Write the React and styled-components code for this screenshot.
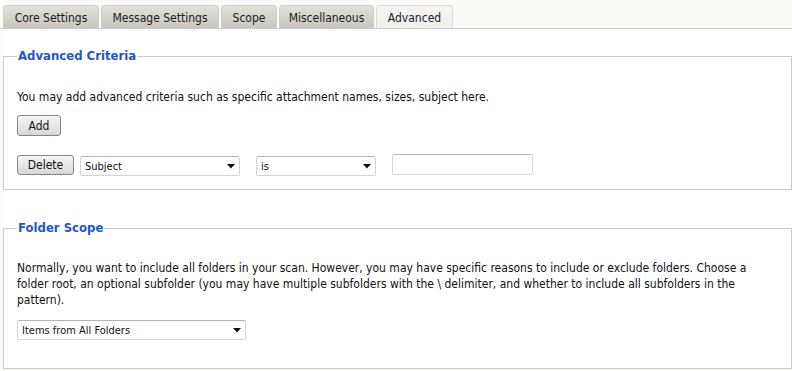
import React from "react";
import styled, { createGlobalStyle } from "styled-components";

const Global = createGlobalStyle`
  html, body { margin: 0; padding: 0; }
  body {
    background: #fafaf8;
    font-family: "DejaVu Sans Condensed", "DejaVu Sans", Tahoma, sans-serif;
    font-size: 12px;
    color: #111;
  }
`;

const TabBar = styled.div`
  display: flex;
  align-items: flex-end;
  gap: 2px;
  height: 28px;
  padding: 0 0 0 3px;
  border-bottom: 1px solid #c9c9c9;
  background: #fafaf8;
`;

const Tab = styled.div`
  box-sizing: border-box;
  width: ${(p) => p.$w}px;
  height: 23px;
  display: flex;
  align-items: center;
  justify-content: center;
  padding-top: 1px;
  border: 1px solid ${(p) => (p.$active ? "#dcdbd5" : "#d2d0c6")};
  border-bottom: none;
  border-radius: 4px 4px 0 0;
  background: ${(p) =>
    p.$active
      ? "linear-gradient(#f6f5f1, #efeee9)"
      : "linear-gradient(#e2e0d8, #c9c7bd)"};
  color: #1a1a28;
  font-size: 12px;
  white-space: nowrap;
`;

const Panel = styled.div`
  margin-left: 3px;
  background: #fff;
  padding-top: 20px;
  padding-bottom: 0;
`;

const Fieldset = styled.fieldset`
  margin: ${(p) => p.$mt || 0}px 0 0 0;
  padding: 0 13px ${(p) => p.$pb}px 13px;
  border: 1px solid #cbcbcb;
  min-width: 0;
`;

const Legend = styled.legend`
  padding: 0 1px;
  font-weight: bold;
  font-size: 13px;
  line-height: 14px;
  color: #1f56c9;
`;

const Text = styled.p`
  margin: ${(p) => p.$mt}px 0 0 0;
  line-height: ${(p) => p.$lh || 16}px;
  font-size: 12px;
`;

const Button = styled.button`
  box-sizing: border-box;
  height: ${(p) => p.$h || 20}px;
  width: ${(p) => p.$w}px;
  margin-top: ${(p) => p.$mt || 0}px;
  padding: 0;
  border: 1px solid #858585;
  border-radius: 3px;
  background: linear-gradient(#f7f7f7, #e6e6e6 55%, #d6d6d6);
  font-family: inherit;
  font-size: 12px;
  color: #111;
  display: block;
`;

const Row = styled.div`
  display: flex;
  align-items: flex-start;
  margin-top: 19px;
`;

const SelectWrap = styled.div`
  position: relative;
  box-sizing: border-box;
  width: ${(p) => p.$w}px;
  height: ${(p) => p.$h || 20}px;
  margin-left: ${(p) => p.$ml || 0}px;
  margin-top: ${(p) => p.$mt || 0}px;
`;

const Select = styled.select`
  appearance: none;
  -webkit-appearance: none;
  box-sizing: border-box;
  width: 100%;
  height: 100%;
  margin: 0;
  padding: 0 16px 0 4px;
  border: 1px solid #d4d4d4;
  border-top-color: #b4b4b4;
  border-radius: 2px;
  background: #fff;
  font-family: inherit;
  font-size: 11px;
  color: #111;
  outline: none;
`;

const Arrow = styled.svg`
  position: absolute;
  right: 5px;
  top: 50%;
  margin-top: -2px;
  pointer-events: none;
`;

const TextInput = styled.input`
  box-sizing: border-box;
  width: 141px;
  height: 21px;
  margin: -1px 0 0 16px;
  border: 1px solid #d8d8d8;
  border-top-color: #b8b8b8;
  border-radius: 2px;
  background: #fff;
  font-family: inherit;
  font-size: 11px;
`;

function Dropdown({ w, h, ml, mt, value, options }) {
  return (
    <SelectWrap $w={w} $h={h} $ml={ml} $mt={mt}>
      <Select defaultValue={value}>
        {options.map((o) => (
          <option key={o}>{o}</option>
        ))}
      </Select>
      <Arrow width="8" height="5" viewBox="0 0 8 5">
        <path d="M0 0 H8 L4 4.5 Z" fill="#111" />
      </Arrow>
    </SelectWrap>
  );
}

const tabs = [
  { label: "Core Settings", w: 96 },
  { label: "Message Settings", w: 118 },
  { label: "Scope", w: 56 },
  { label: "Miscellaneous", w: 95 },
  { label: "Advanced", w: 77, active: true },
];

export default function App() {
  return (
    <>
      <Global />
      <TabBar>
        {tabs.map((t) => (
          <Tab key={t.label} $w={t.w} $active={t.active}>
            {t.label}
          </Tab>
        ))}
      </TabBar>
      <Panel>
        <Fieldset $pb={13}>
          <Legend>Advanced Criteria</Legend>
          <Text $mt={26}>
            You may add advanced criteria such as specific attachment names, sizes, subject here.
          </Text>
          <Button $w={44} $h={21} $mt={10}>Add</Button>
          <Row>
            <Button $w={57}>Delete</Button>
            <Dropdown
              w={160}
              ml={6}
              mt={1}
              value="Subject"
              options={["Subject", "Attachment Name", "Size", "From", "To"]}
            />
            <Dropdown
              w={120}
              ml={16}
              mt={1}
              value="is"
              options={["is", "is not", "contains", "does not contain"]}
            />
            <TextInput type="text" />
          </Row>
        </Fieldset>
        <Fieldset $mt={31} $pb={28}>
          <Legend>Folder Scope</Legend>
          <Text $mt={25} $lh={16}>
            Normally, you want to include all folders in your scan. However, you may have specific
            reasons to include or exclude folders. Choose a folder root, an optional subfolder (you
            may have multiple subfolders with the \ delimiter, and whether to include all subfolders
            in the pattern).
          </Text>
          <Dropdown
            w={229}
            mt={12}
            value="Items from All Folders"
            options={["Items from All Folders", "Inbox", "Sent Items"]}
          />
        </Fieldset>
      </Panel>
    </>
  );
}
